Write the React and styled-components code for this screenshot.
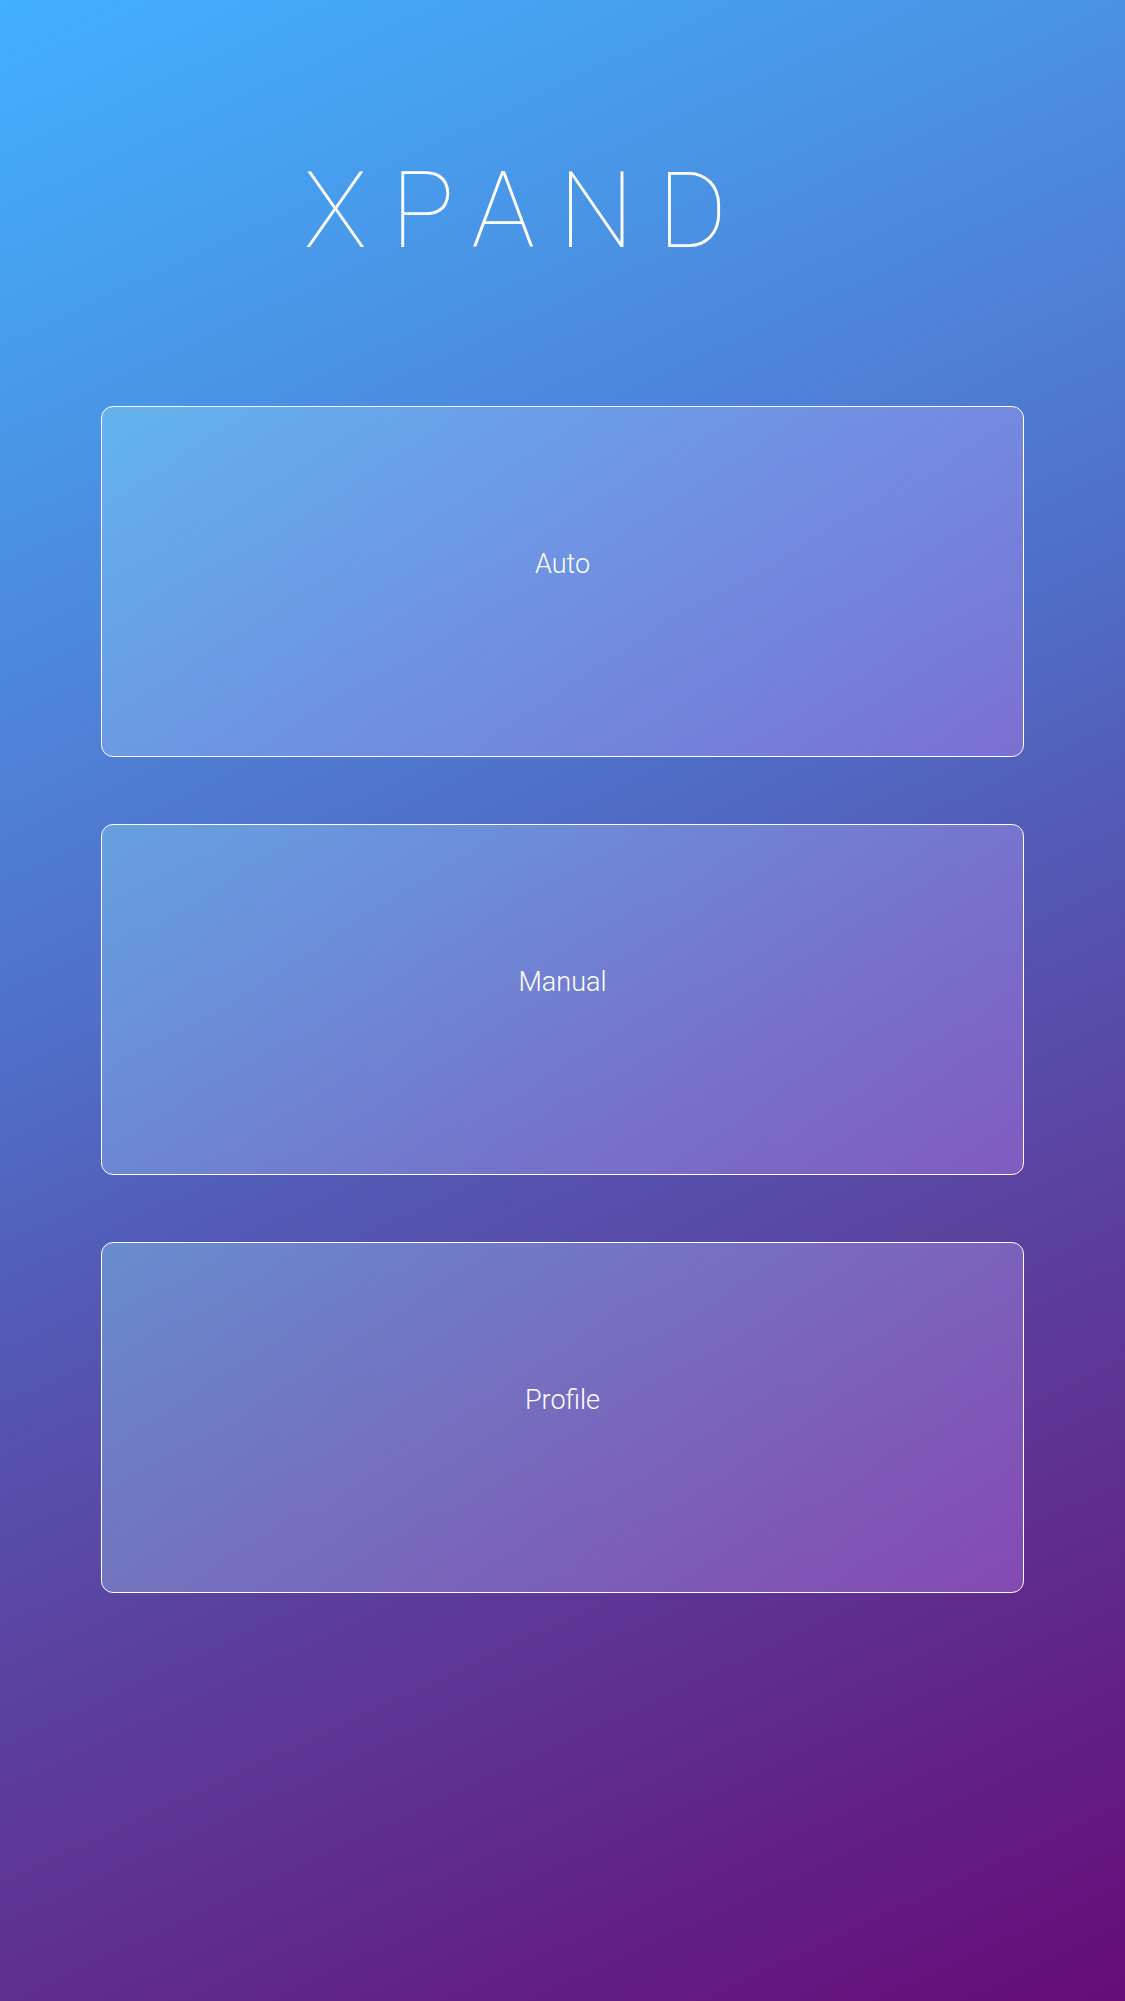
import React from 'react'
import styled, { createGlobalStyle } from 'styled-components'

const GlobalStyle = createGlobalStyle`
html, body {
  margin: 0;
  padding: 0;
}
body {
  font-family: "Roboto", "Liberation Sans", sans-serif;
}
`

const Screen = styled.div`
min-height: 2001px;
box-sizing: border-box;
padding: 158px 101px 0 101px;
background: linear-gradient(155deg, #42b0ff 0%, #4a93e4 20%, #4f7dd4 33%, #4f6fc8 42%, #5552ae 57%, #5a44a0 66%, #660c78 100%);
display: flex;
flex-direction: column;
align-items: stretch;
`

const Title = styled.h1`
margin: 0;
text-align: center;
color: #fff;
font-weight: 100;
font-size: 106px;
line-height: 106px;
letter-spacing: 24px;
padding-right: 70px;
`

const Menu = styled.div`
margin-top: 142px;
display: flex;
flex-direction: column;
gap: 67px;
`

const Card = styled.button`
height: 351px;
border: 1px solid #fff;
border-radius: 12px;
background: linear-gradient(135deg, rgba(150, 240, 255, 0.32) 0%, rgba(210, 140, 255, 0.32) 100%);
color: #fff;
font-family: "Roboto", "Liberation Sans", sans-serif;
font-weight: 300;
font-size: 27px;
display: flex;
align-items: center;
justify-content: center;
padding: 0 0 36px 0;
cursor: pointer;
`

const items = ['Auto', 'Manual', 'Profile']

export default function App() {
  return (
    <>
      <GlobalStyle />
      <Screen>
        <Title>XPAND</Title>
        <Menu>
          {items.map((label) => (
            <Card key={label}>{label}</Card>
          ))}
        </Menu>
      </Screen>
    </>
  )
}
